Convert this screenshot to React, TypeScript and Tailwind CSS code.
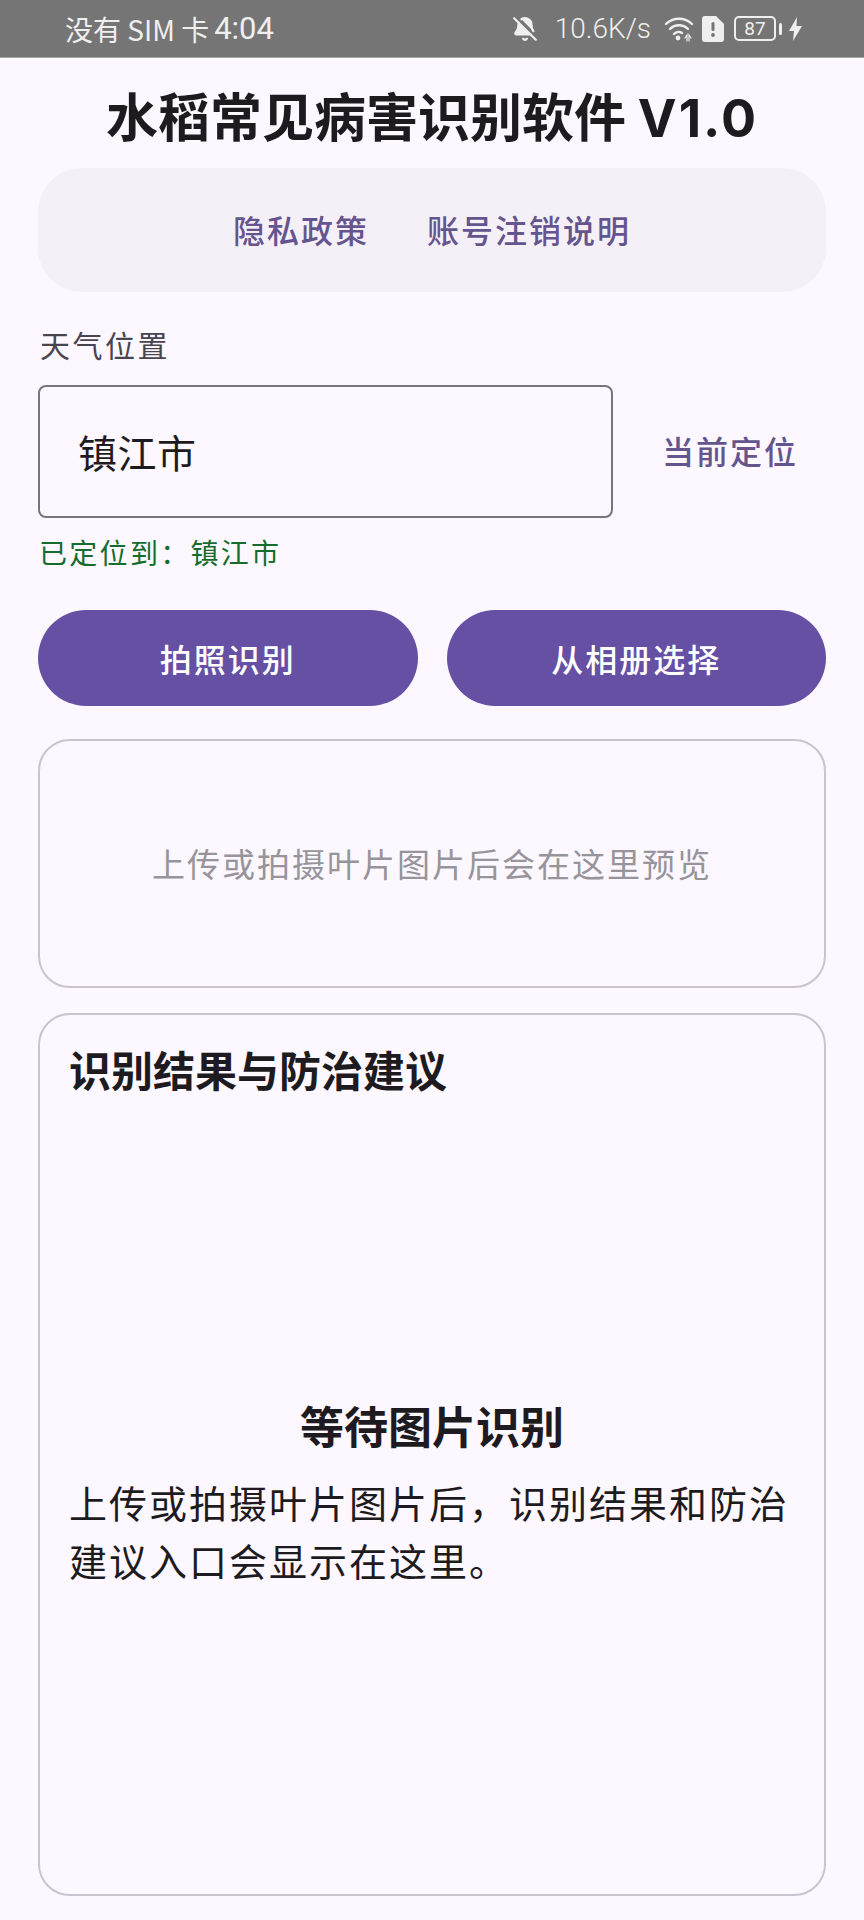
import React from "react";
import { BellOff } from "lucide-react";

const cjk = "font-['Noto_Sans_CJK_SC','Noto_Sans',sans-serif]";

const StatusBar: React.FC = () => {
  return (
    <div className="h-[58px] shrink-0 bg-[#757575] border-b border-[#a8a8a8] flex items-center pl-[65px] pr-[62px] text-[#efefef]">
      <span className="text-[28px] leading-none whitespace-nowrap">没有 SIM 卡</span>
      <span className="ml-[5px] text-[31px] leading-none font-['Roboto',sans-serif]">4:04</span>
      <div className="ml-auto flex items-center">
        <BellOff className="w-[26px] h-[26px]" fill="currentColor" strokeWidth={2} />
        <span className="ml-[17px] text-[28px] leading-none font-['Roboto',sans-serif] font-light">10.6K/s</span>
        <svg className="ml-[13px]" width="30" height="26" viewBox="0 0 30 26" fill="none" stroke="currentColor" strokeWidth="2.4" strokeLinecap="round">
          <path d="M2 8 C9 1 21 1 28 8" />
          <path d="M6 13 C11 8 19 8 24 13" />
          <path d="M10 18 C12.500 15.500 16 15.500 18 17" />
          <circle cx="14" cy="22" r="2.400" fill="currentColor" stroke="none" />
          <path d="M21 22 l2-3 v6 M27 22 l-2-3 v6" strokeWidth="1.200" />
        </svg>
        <svg className="ml-[8px]" width="22" height="26" viewBox="0 0 22 26">
          <path d="M3 0 H14 L22 8 V23 a3 3 0 0 1 -3 3 H3 a3 3 0 0 1 -3 -3 V3 a3 3 0 0 1 3 -3 Z" fill="currentColor" />
          <rect x="9.500" y="6" width="3" height="9" rx="1.500" fill="#757575" />
          <circle cx="11" cy="19" r="1.900" fill="#757575" />
        </svg>
        <div className="ml-[10px] w-[42px] h-[25px] rounded-[5px] border-2 border-[#efefef] flex items-center justify-center text-[19px] leading-none font-['Roboto',sans-serif]">87</div>
        <div className="ml-[3px] w-[3px] h-[12px] rounded-full bg-[#efefef]"></div>
        <svg className="ml-[7px]" width="13" height="24" viewBox="0 0 13 24">
          <path d="M8 0 L0 14 H5 L4 24 L13 9 H7.500 Z" fill="currentColor" />
        </svg>
      </div>
    </div>
  );
};

export default function App() {
  return (
    <div className={`w-[864px] h-[1920px] bg-[#fdf7ff] flex flex-col overflow-hidden text-[#1d1b20] ${cjk}`}>
      <StatusBar />
      <div className="flex-1 flex flex-col px-[38px]">
        <h1 className="mt-[27px] h-[60px] text-[52px] leading-[60px] font-bold text-center whitespace-nowrap">
          水稻常见病害识别软件 <span className="font-['Inter',sans-serif] tracking-[2px]">V1.0</span>
        </h1>

        <div className="mt-[23px] h-[124px] pb-[3px] rounded-[44px] bg-[#f5f0f8] flex items-center justify-center gap-[58px] text-[32px] leading-none font-medium tracking-[2px] text-[#65558f]">
          <span>隐私政策</span>
          <span>账号注销说明</span>
        </div>

        <div className="mt-[32px] ml-[2px] text-[30px] leading-[40px] tracking-[2.5px] text-[#49454f]">天气位置</div>

        <div className="mt-[21px] flex items-center">
          <div className="w-[575px] h-[133px] pb-[1px] rounded-[8px] border-2 border-[#79747e] flex items-center pl-[38px] text-[39px] tracking-[0.5px]">镇江市</div>
          <span className="ml-[49px] pb-[3px] text-[32px] leading-none font-medium tracking-[2px] text-[#65558f]">当前定位</span>
        </div>

        <div className="mt-[14px] ml-[1px] text-[28px] leading-[40px] tracking-[2.3px] text-[#146c2e] whitespace-nowrap">已定位到：镇江市</div>

        <div className="mt-[38px] flex gap-[29px]">
          <button className="flex-1 h-[96px] pb-[1px] rounded-full bg-[#6650a4] text-white text-[32px] font-medium tracking-[2px]">拍照识别</button>
          <button className="flex-1 h-[96px] pb-[1px] rounded-full bg-[#6650a4] text-white text-[32px] font-medium tracking-[2px]">从相册选择</button>
        </div>

        <div className="mt-[33px] h-[249px] rounded-[32px] border-2 border-[#c9c4cf] flex items-center justify-center text-[33px] tracking-[2px] text-[#97949b]">上传或拍摄叶片图片后会在这里预览</div>

        <div className="mt-[25px] h-[883px] rounded-[32px] border-2 border-[#c9c4cf] flex flex-col px-[29px]">
          <div className="mt-[26px] text-[42px] leading-[56px] font-bold">识别结果与防治建议</div>
          <div className="mt-[298px] text-[44px] leading-[60px] font-bold text-center">等待图片识别</div>
          <p className="mt-[18px] text-[38px] leading-[58px] tracking-[2px]">上传或拍摄叶片图片后，识别结果和防治建议入口会显示在这里。</p>
        </div>
      </div>
    </div>
  );
}
